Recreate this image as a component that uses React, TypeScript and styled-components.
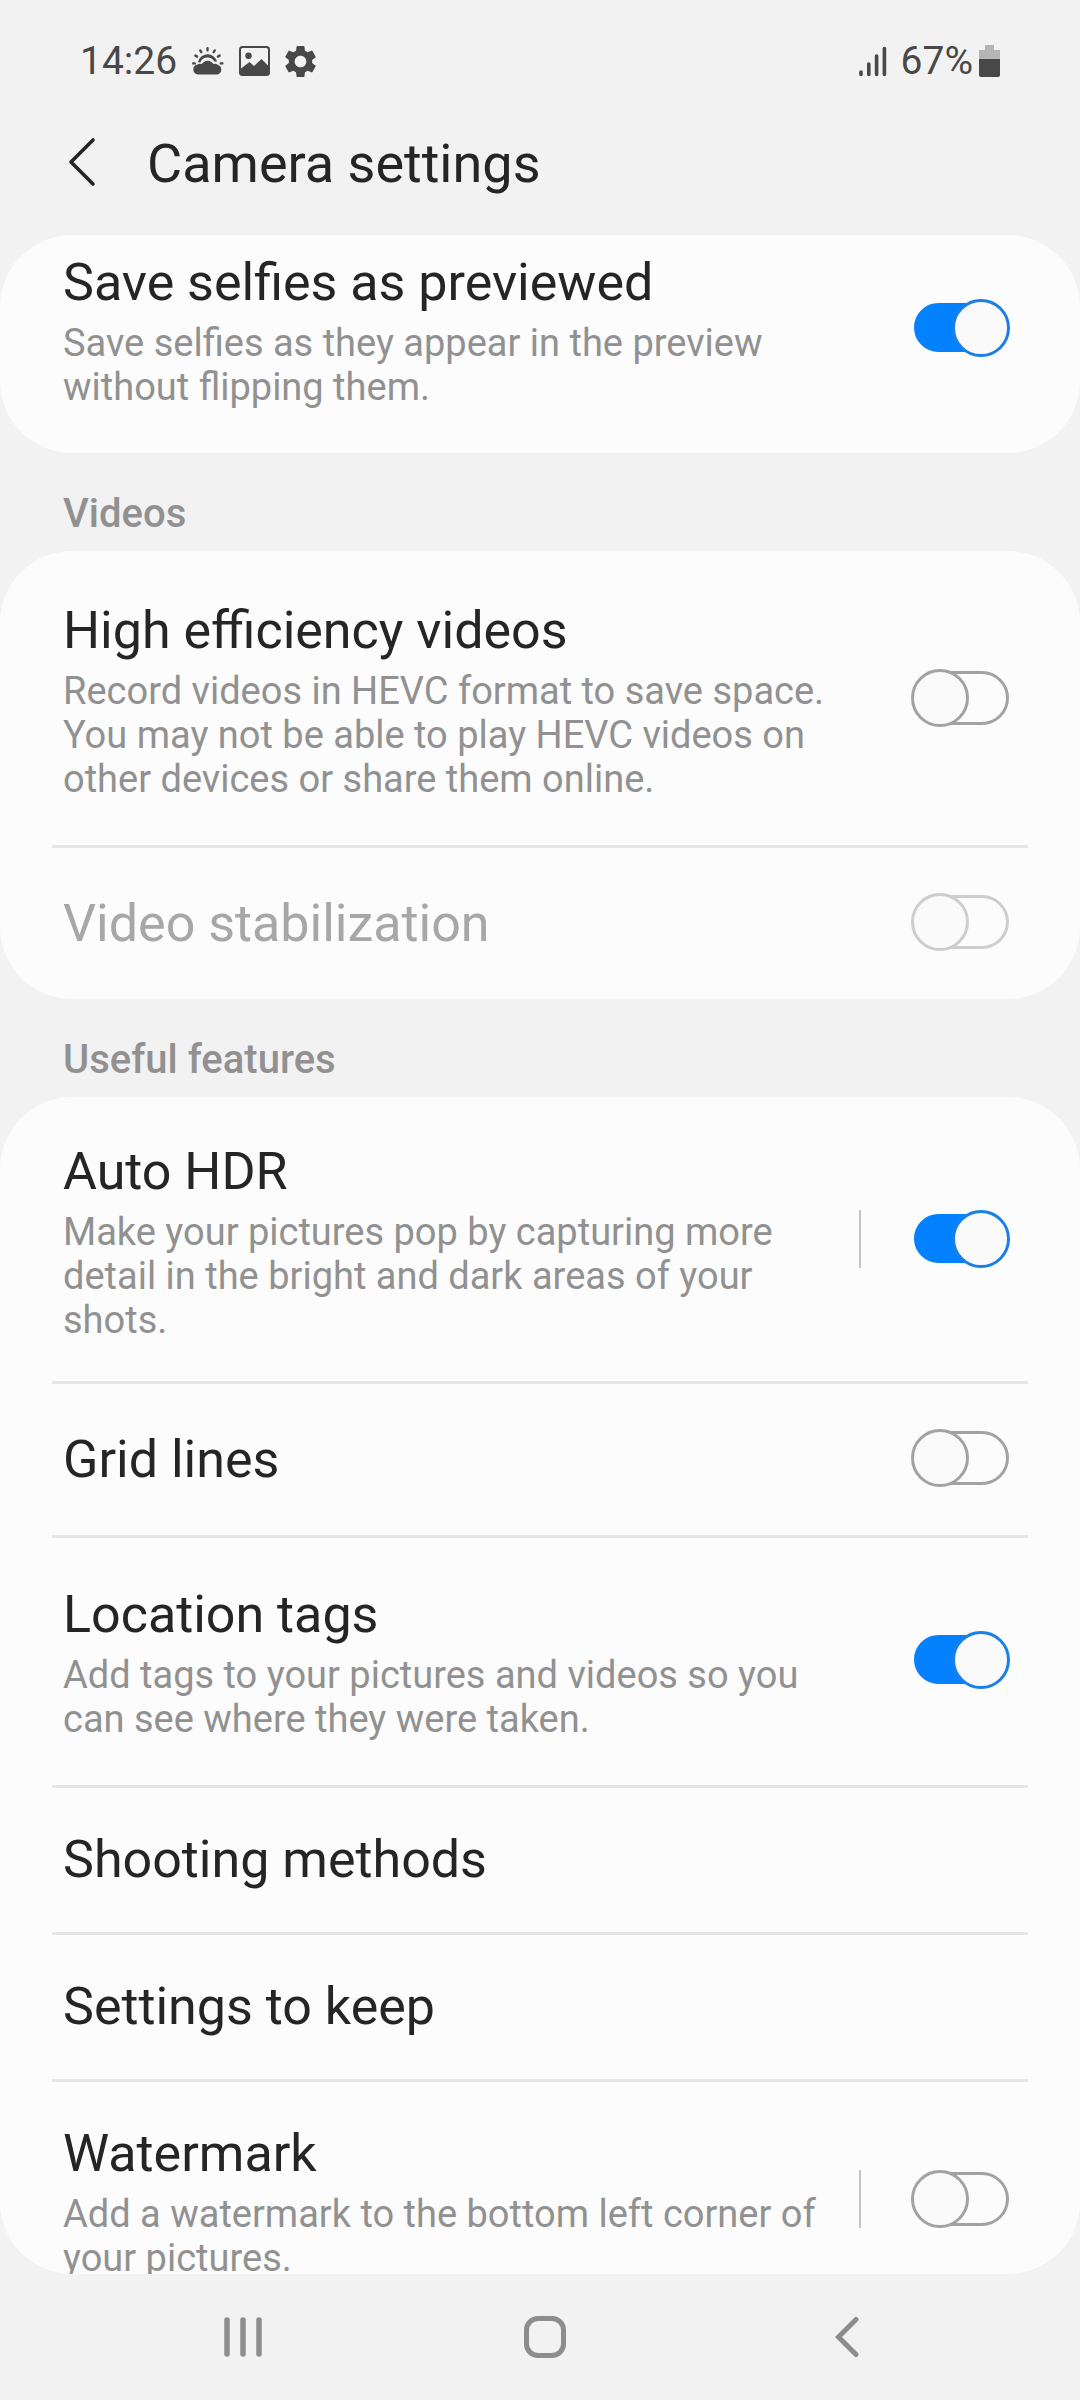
import { useId, useState } from "react";
import type { ReactNode } from "react";
import styled, { createGlobalStyle, css } from "styled-components";
import { MdSettings } from "react-icons/md";

const color = {
  page: "#f2f2f2",
  card: "#fcfcfc",
  text: "#252525",
  muted: "#919191",
  disabled: "#a7a7a7",
  line: "#e6e6e6",
  separator: "#c4c4c4",
  status: "#484848",
  nav: "#8d8d8d",
  accent: "#0381fe",
  knobRing: "#1a80e6",
  knob: "#fafafa",
  ring: "#a2a2a2",
  ringDisabled: "#cdcdcd",
};

const GlobalStyle = createGlobalStyle`
  * { box-sizing: border-box; }
  body {
    margin: 0;
    background: ${color.page};
    color: ${color.text};
    font-family: Roboto, "Noto Sans", sans-serif;
  }
`;

const Screen = styled.div`
  display: flex;
  flex-direction: column;
  height: 100vh;
  overflow: hidden;
`;

const StatusBar = styled.div`
  display: flex;
  align-items: center;
  justify-content: space-between;
  height: 92px;
  padding: 30px 80px 0;
  color: ${color.status};
  font-size: 39px;
  line-height: 62px;
`;

const StatusGroup = styled.div<{ $gap: number }>`
  display: flex;
  align-items: center;
  gap: ${(p) => p.$gap}px;

  svg { display: block; }
`;

const GearIcon = styled(MdSettings)`
  margin-left: -4px;
`;

const Header = styled.header`
  display: flex;
  align-items: center;
  gap: 35px;
  height: 143px;
  padding: 0 52px;
`;

const IconButton = styled.button`
  display: flex;
  align-items: center;
  justify-content: center;
  padding: 0;
  border: 0;
  background: none;
  color: inherit;
  cursor: pointer;
`;

const BackButton = styled(IconButton)`
  width: 60px;
  height: 72px;
  padding-bottom: 4px;
`;

const PageTitle = styled.h1`
  margin: 0;
  font-size: 54px;
  font-weight: 400;
  line-height: 68px;
`;

const Scroller = styled.main`
  flex: 1;
  min-height: 0;
  overflow-y: auto;
  scrollbar-width: none;
  border-radius: 72px;
`;

const Card = styled.section<{ $scrolled?: boolean }>`
  border-radius: 72px;
  padding: 0 52px;
  background: ${color.card};
  ${(p) => p.$scrolled && css`margin-top: -32px;`}
`;

const SectionLabel = styled.h2`
  margin: 0;
  padding: 36px 63px 12px;
  color: ${color.muted};
  font-size: 40px;
  font-weight: 500;
  line-height: 50px;
`;

const rowLayout = css`
  display: flex;
  align-items: center;
  width: 100%;
  border: 0 solid ${color.line};
  border-top-width: 3px;
`;

const rowPadding = {
  plain: "0 18px 0 11px",
  described: "43px 18px 44px 11px",
  split: "38px 18px 39px 11px",
};

const Row = styled.div<{ $kind: keyof typeof rowPadding }>`
  ${rowLayout}
  min-height: 154px;
  padding: ${(p) => rowPadding[p.$kind]};

  &:first-child { border-color: transparent; }
`;

const LinkRow = styled.button`
  ${rowLayout}
  min-height: 147px;
  padding: ${rowPadding.plain};
  background: none;
  color: inherit;
  font: inherit;
  text-align: left;
  cursor: pointer;
`;

const TextColumn = styled.label<{ $off?: boolean }>`
  flex: 1;
  display: flex;
  flex-direction: column;
  gap: 4px;
  color: ${(p) => (p.$off ? color.disabled : "inherit")};
`;

const Title = styled.span`
  font-size: 52px;
  line-height: 68px;
`;

const Description = styled.span`
  color: ${color.muted};
  font-size: 38px;
  line-height: 44px;
`;

const Control = styled.div<{ $split?: boolean }>`
  display: flex;
  align-items: center;
  margin: 0 0 3px ${(p) => (p.$split ? 36 : 72)}px;
  ${(p) =>
    p.$split &&
    css`
      padding-left: 50px;
      border-left: 2px solid ${color.separator};
    `}
`;

const Switch = styled.input`
  appearance: none;
  display: grid;
  align-items: center;
  width: 99px;
  height: 58px;
  margin: 0;
  cursor: pointer;

  &::before,
  &::after {
    content: "";
    grid-area: 1 / 1;
    box-sizing: border-box;
    border: 3px solid ${color.ring};
  }

  &::before {
    height: 54px;
    margin: 0 1px 0 3px;
    border-radius: 27px;
  }

  &::after {
    width: 58px;
    height: 58px;
    border-radius: 50%;
    background: ${color.knob};
  }

  &:checked::before {
    height: 49px;
    border-color: ${color.accent};
    background: ${color.accent};
  }

  &:checked::after {
    justify-self: end;
    border-color: ${color.knobRing};
  }

  &:disabled { cursor: default; }
  &:disabled::before,
  &:disabled::after { border-color: ${color.ringDisabled}; }
`;

const NavBar = styled.nav`
  display: grid;
  grid-template-columns: repeat(3, 1fr);
  height: 126px;
  padding: 0 82px 0 92px;
  color: ${color.nav};
`;

type SettingProps = {
  title: string;
  description?: ReactNode;
  on?: boolean;
  disabled?: boolean;
  split?: boolean;
};

function Setting({ title, description, on = false, disabled, split }: SettingProps) {
  const id = useId();
  const [checked, setChecked] = useState(on);
  const kind = split ? "split" : description ? "described" : "plain";
  return (
    <Row $kind={kind}>
      <TextColumn htmlFor={id} $off={disabled}>
        <Title>{title}</Title>
        {description && <Description>{description}</Description>}
      </TextColumn>
      <Control $split={split}>
        <Switch
          id={id}
          type="checkbox"
          role="switch"
          checked={checked}
          disabled={disabled}
          onChange={(e) => setChecked(e.target.checked)}
        />
      </Control>
    </Row>
  );
}

const WeatherIcon = () => (
  <svg width="32" height="28" viewBox="0 0 32 28" fill="currentColor" aria-hidden="true">
    <g stroke="currentColor" strokeWidth="2.4" strokeLinecap="round">
      <path d="M15.5 1.3v2M8.3 3.4l1 1.7M22.7 3.4l-1 1.7M3.4 8.6l1.7 1M27.6 8.6l-1.7 1M1.2 16.4h1.6M28.8 16.4h1.6" />
    </g>
    <path d="M6 15.2a9.7 9.7 0 0 1 19-.6 6 6 0 0 0-2.6-.1c-1.6-2.7-4-4-6.8-4-3.4 0-6.4 1.9-7.4 5.1z" />
    <path d="M6 27.5a5 5 0 0 1-.6-9.900 4.600 4.600 0 0 1 4.300-.6 7 7 0 0 1 11.800 0 4.800 4.800 0 0 1 4.400.9 5 5 0 0 1-.4 9.600z" />
  </svg>
);

const PictureIcon = () => (
  <svg width="31" height="30" viewBox="0 0 31 30" aria-hidden="true">
    <rect x="1" y="1" width="29" height="28" rx="2.5" fill="none" stroke="currentColor" strokeWidth="2" />
    <circle cx="9.5" cy="9.8" r="3.2" fill="currentColor" />
    <path d="M2 22.5 10.5 16l4.5 4 7.5-7L29 19.5V28H2z" fill="currentColor" />
  </svg>
);

const SignalIcon = () => (
  <svg width="28" height="32" viewBox="0 0 28 32" aria-hidden="true">
    <path
      d="M2 27v2.5M9.8 19v10.5M17.6 11v18.5M25.4 3.5v26"
      stroke="currentColor"
      strokeWidth="3.6"
      strokeLinecap="round"
    />
  </svg>
);

const BatteryIcon = () => (
  <svg width="21" height="32" viewBox="0 0 21 32" aria-hidden="true">
    <path d="M6 0h9v5h6v9H0V5h6z" fill="#b5b5b5" />
    <path d="M0 14h21v16a2 2 0 0 1-2 2H2a2 2 0 0 1-2-2z" fill="currentColor" />
  </svg>
);

export default function App() {
  return (
    <Screen>
      <GlobalStyle />
      <StatusBar>
        <StatusGroup $gap={15}>
          <span>14:26</span>
          <WeatherIcon />
          <PictureIcon />
          <GearIcon size={39} aria-hidden="true" />
        </StatusGroup>
        <StatusGroup $gap={14}>
          <SignalIcon />
          <StatusGroup $gap={6}>
            <span>67%</span>
            <BatteryIcon />
          </StatusGroup>
        </StatusGroup>
      </StatusBar>

      <Header>
        <BackButton aria-label="Navigate up">
          <svg width="28" height="50" viewBox="0 0 28 50" fill="none" aria-hidden="true">
            <path d="M25 3 3 25l22 22" stroke="currentColor" strokeWidth="3.6" strokeLinecap="round" strokeLinejoin="round" />
          </svg>
        </BackButton>
        <PageTitle>Camera settings</PageTitle>
      </Header>

      <Scroller>
        <Card $scrolled>
          <Setting
            title="Save selfies as previewed"
            description="Save selfies as they appear in the preview without flipping them."
            on
          />
        </Card>

        <SectionLabel>Videos</SectionLabel>
        <Card>
          <Setting
            title="High efficiency videos"
            description="Record videos in HEVC format to save space. You may not be able to play HEVC videos on other devices or share them online."
          />
          <Setting title="Video stabilization" disabled />
        </Card>

        <SectionLabel>Useful features</SectionLabel>
        <Card>
          <Setting
            title="Auto HDR"
            description="Make your pictures pop by capturing more detail in the bright and dark areas of your shots."
            on
            split
          />
          <Setting title="Grid lines" />
          <Setting
            title="Location tags"
            description="Add tags to your pictures and videos so you can see where they were taken."
            on
          />
          <LinkRow>
            <Title>Shooting methods</Title>
          </LinkRow>
          <LinkRow>
            <Title>Settings to keep</Title>
          </LinkRow>
          <Setting
            title="Watermark"
            description="Add a watermark to the bottom left corner of your pictures."
            split
          />
        </Card>
      </Scroller>

      <NavBar aria-label="System navigation">
        <IconButton aria-label="Recent apps">
          <svg width="38" height="42" viewBox="0 0 38 42" aria-hidden="true">
            <path d="M3 4v34M19 4v34M35 4v34" stroke="currentColor" strokeWidth="5.5" strokeLinecap="round" />
          </svg>
        </IconButton>
        <IconButton aria-label="Home">
          <svg width="42" height="42" viewBox="0 0 42 42" aria-hidden="true">
            <rect x="2.5" y="2.5" width="37" height="37" rx="11.5" fill="none" stroke="currentColor" strokeWidth="5" />
          </svg>
        </IconButton>
        <IconButton aria-label="Back">
          <svg width="24" height="42" viewBox="0 0 24 42" fill="none" aria-hidden="true">
            <path d="M21 3.5 3.5 21 21 38.5" stroke="currentColor" strokeWidth="5" strokeLinecap="round" />
          </svg>
        </IconButton>
      </NavBar>
    </Screen>
  );
}
